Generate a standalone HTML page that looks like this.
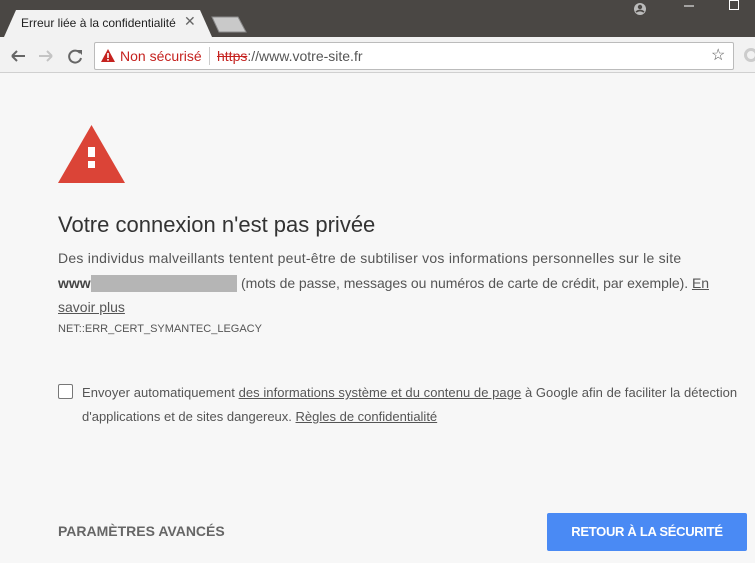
<!DOCTYPE html>
<html><head><meta charset="utf-8"><style>
*{margin:0;padding:0;box-sizing:border-box}
body{width:755px;height:563px;overflow:hidden;background:#f7f7f7;font-family:"Liberation Sans",sans-serif;position:relative;color:#333}
.a{position:absolute;white-space:nowrap}
u{text-decoration:underline}
</style></head><body>
<div class="a" style="left:0;top:0;width:755px;height:37px;background:#4a4744"></div>
<svg class="a" style="left:0;top:0" width="260" height="38">
<path d="M4 37 L16 10 H200 L212 37 Z" fill="#f2f2f2"/>
<path d="M212 17 H238 L246 32 H219 Z" fill="#c9c9c9" stroke="#8a8a8a" stroke-width="1"/>
</svg>
<div class="a" style="left:21px;top:16px;font-size:12px;color:#222">Erreur liée à la confidentialité</div>
<div class="a" style="left:184px;top:13px;font-size:14px;color:#666">✕</div>
<svg class="a" style="left:630px;top:0" width="125" height="20">
<circle cx="10" cy="9" r="6" fill="#bbb"/><circle cx="10" cy="7" r="2.2" fill="#4a4744"/><path d="M6 12 Q10 9 14 12" stroke="#4a4744" stroke-width="1.6" fill="none"/>
<path d="M54 6 H64" stroke="#fff" stroke-width="1"/>
<rect x="99.5" y="0.5" width="9" height="9" fill="none" stroke="#fff"/>
</svg>
<div class="a" style="left:0;top:37px;width:755px;height:36px;background:#f2f2f2;border-bottom:1px solid #d0d0d0"></div>
<svg class="a" style="left:0;top:37px" width="95" height="36">
<path d="M12 19 H25 M12 19 L17 14 M12 19 L17 24" stroke="#666" stroke-width="2" fill="none"/>
<path d="M52 19 H39 M52 19 L47 14 M52 19 L47 24" stroke="#c4c4c4" stroke-width="2" fill="none"/>
<path d="M80 16 A6 6 0 1 0 81 21" stroke="#666" stroke-width="2" fill="none"/><path d="M77 13 L82 13 L82 18 Z" fill="#666"/>
</svg>
<div class="a" style="left:94px;top:42px;width:640px;height:28px;background:#fff;border:1px solid #bbb;border-radius:2px"></div>
<svg class="a" style="left:100px;top:48px" width="16" height="15"><path d="M8 1 L15 14 H1 Z" fill="#c5221f"/><rect x="7.2" y="5" width="1.6" height="5" fill="#fff"/><rect x="7.2" y="11" width="1.6" height="1.6" fill="#fff"/></svg>
<div class="a" style="left:120px;top:48px;font-size:14px;color:#c5221f">Non sécurisé</div>
<div class="a" style="left:209px;top:47px;width:1px;height:18px;background:#ccc"></div>
<div class="a" style="left:217px;top:48px;font-size:14px;color:#555"><span style="color:#c5221f;text-decoration:line-through">https</span>://www.votre-site.fr</div>
<div class="a" style="left:711px;top:45px;font-size:16px;color:#555">☆</div>
<div class="a" style="left:744px;top:48px;width:14px;height:14px;border:3px solid #ccc;border-radius:50%"></div>

<svg class="a" style="left:58px;top:125px" width="67" height="58"><path d="M33.5 0 L67 58 H0 Z" fill="#db4437"/><rect x="30" y="22" width="7" height="10" fill="#fff"/><rect x="30" y="36" width="7" height="7" fill="#fff"/></svg>
<div class="a" style="left:58px;top:212px;font-size:22px;color:#333">Votre connexion n'est pas privée</div>
<div class="a" style="left:58px;top:250px;font-size:14px;color:#555;letter-spacing:0.25px">Des individus malveillants tentent peut-être de subtiliser vos informations personnelles sur le site</div>
<div class="a" style="left:58px;top:275px;font-size:14px;color:#555"><b style="color:#444">www</b></div>
<div class="a" style="left:91px;top:275px;width:146px;height:17px;background:#b5b5b5"></div>
<div class="a" style="left:241px;top:275px;font-size:14px;color:#555;letter-spacing:-0.05px">(mots de passe, messages ou numéros de carte de crédit, par exemple). <u>En</u></div>
<div class="a" style="left:58px;top:299px;font-size:14px;color:#555"><u>savoir plus</u></div>
<div class="a" style="left:58px;top:323px;font-size:11px;color:#555">NET::ERR_CERT_SYMANTEC_LEGACY</div>

<div class="a" style="left:58px;top:384px;width:15px;height:15px;border:1px solid #777;border-radius:2px;background:#fff"></div>
<div class="a" style="left:82px;top:385px;font-size:13px;color:#555;letter-spacing:0.05px">Envoyer automatiquement <u>des informations système et du contenu de page</u> à Google afin de faciliter la détection</div>
<div class="a" style="left:82px;top:409px;font-size:13px;color:#555;letter-spacing:0px">d'applications et de sites dangereux. <u>Règles de confidentialité</u></div>

<div class="a" style="left:58px;top:523px;font-size:14px;font-weight:bold;color:#666">PARAMÈTRES AVANCÉS</div>
<div class="a" style="left:547px;top:513px;width:200px;height:38px;background:#4a8af4;border-radius:2px;color:#fff;font-size:13px;font-weight:bold;text-align:center;line-height:38px;letter-spacing:-0.3px">RETOUR À LA SÉCURITÉ</div>
</body></html>
